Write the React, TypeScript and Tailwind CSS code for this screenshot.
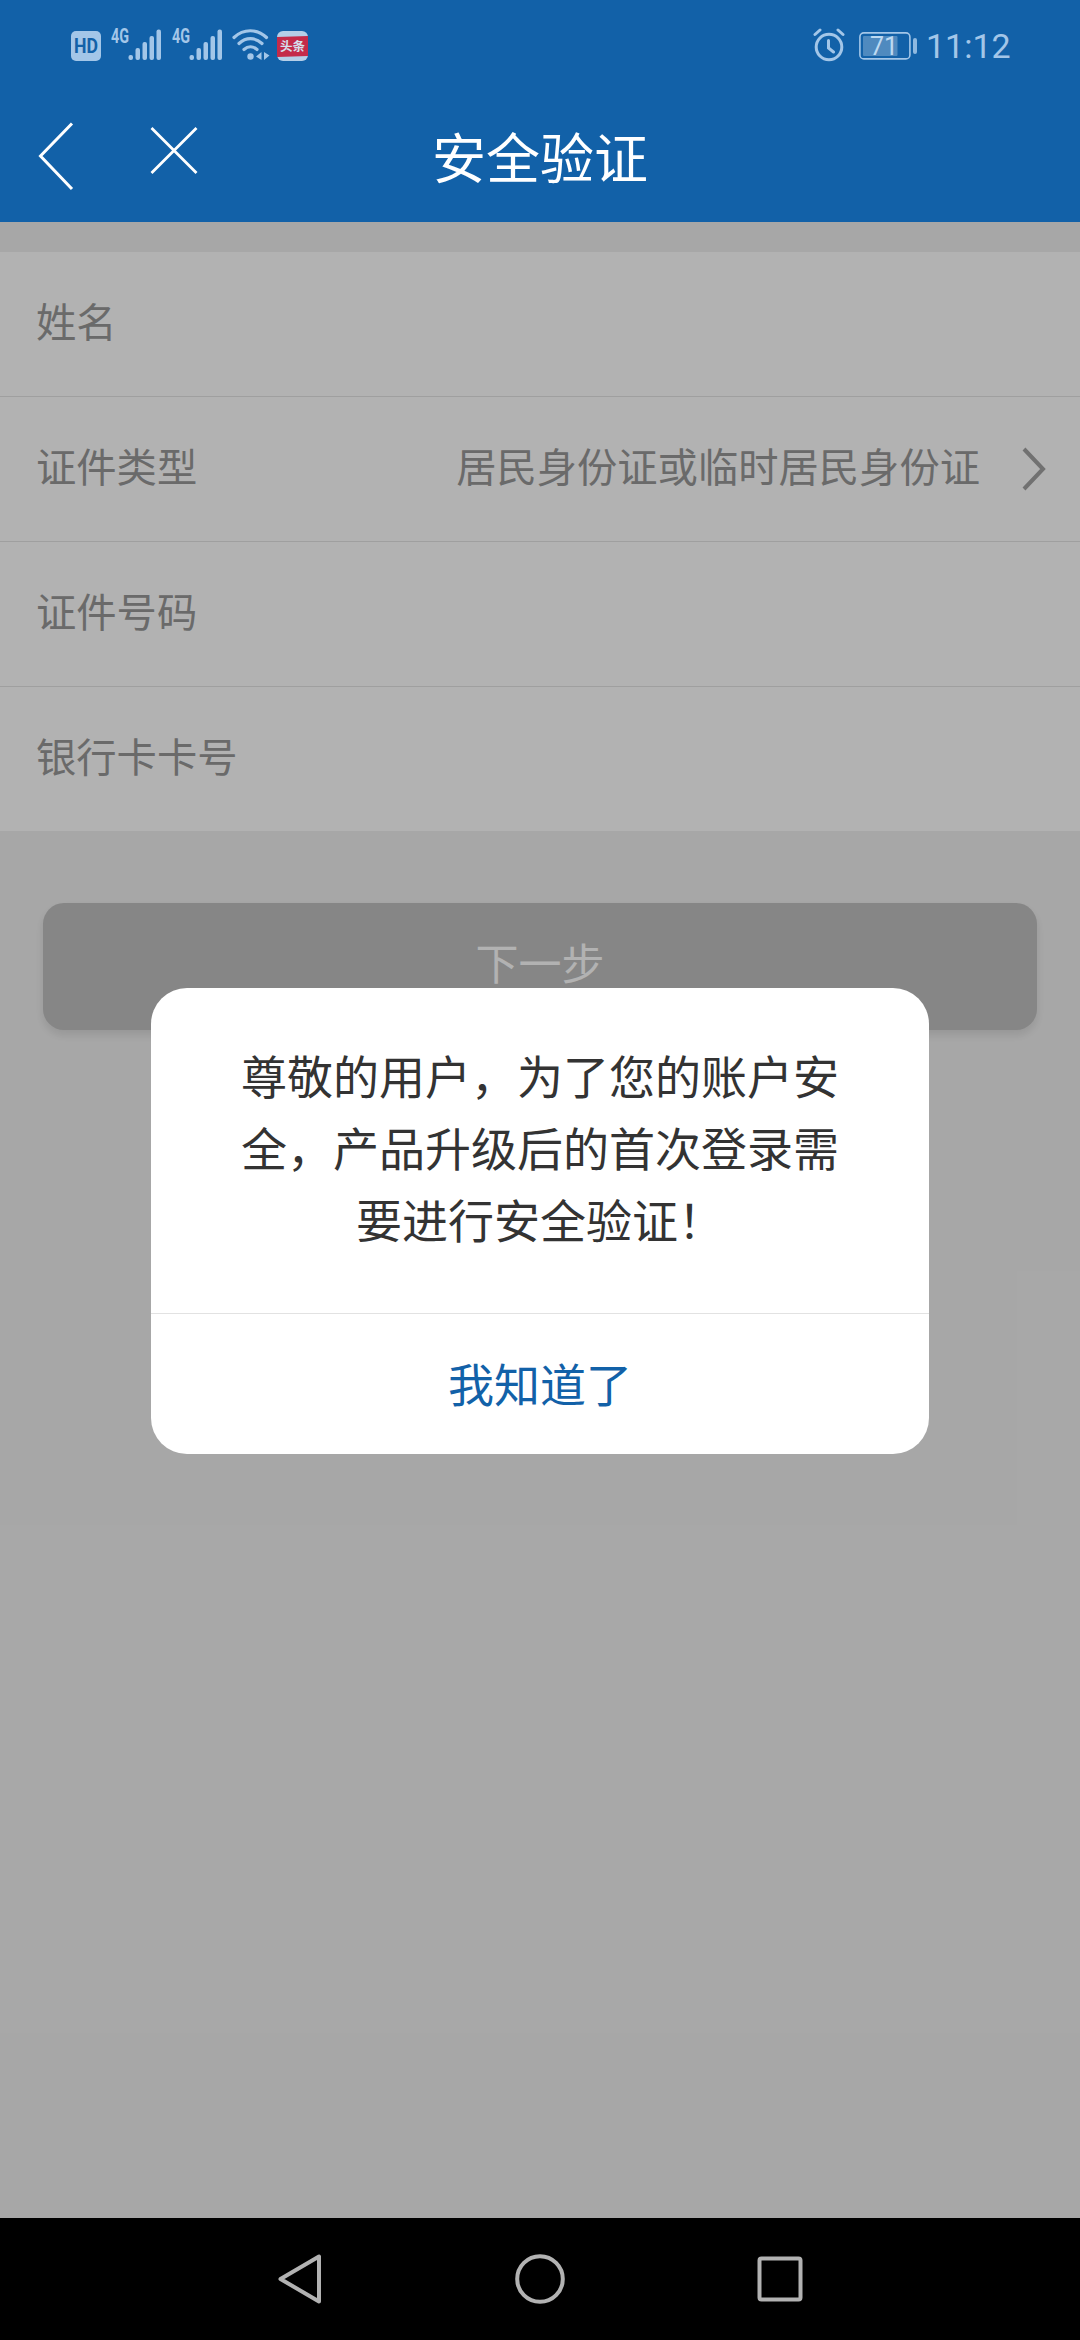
import { ReactNode } from 'react'

interface PropRow {
    label: string,
    last?: boolean,
    children?: ReactNode
}

const SignalIcon = () => (
    <svg width="52" height="44" viewBox="0 -5 52 44" fill="#a3c6e8">
        <text x="0" y="15" fontFamily="Roboto" fontSize="20" fontWeight="700" textLength="18" lengthAdjust="spacingAndGlyphs">4G</text>
        <rect x="17.5" y="27" width="4.5" height="5" rx="2" />
        <rect x="24.5" y="20" width="4.5" height="12" rx="2" />
        <rect x="31.5" y="14" width="4.5" height="18" rx="2" />
        <rect x="38.5" y="8" width="4.5" height="24" rx="2" />
        <rect x="45.5" y="1.5" width="4.5" height="30.5" rx="2" />
    </svg>
)

const WifiIcon = () => (
    <svg width="38" height="34" viewBox="0 0 38 34" fill="none" stroke="#a3c6e8" strokeWidth="3.2" strokeLinecap="round">
        <path d="M2 9.5C11.5 .5 25 .5 34.5 9.5" />
        <path d="M7 15.5C14 9 23 9 30 15.5" />
        <path d="M12 21.5C16 18 21 18 25 21.5" />
        <circle cx="18.5" cy="28.5" r="3.2" fill="#a3c6e8" stroke="none" />
        <path d="M29.5 24v8l-5.5-3.5zM32 24v8l5.5-4.500z" fill="#a3c6e8" stroke="none" />
    </svg>
)

const StatusBar = () => (
    <div className="flex h-[90px] items-center pl-[71px] pr-[70px]">
        <svg className="mt-0.5" width="30" height="30" viewBox="0 0 30 30">
            <rect width="30" height="30" rx="5" fill="#a3c6e8" />
            <text x="3" y="22" fontFamily="Roboto" fontSize="19.5" fontWeight="700" fill="#1261a8" textLength="24" lengthAdjust="spacingAndGlyphs">HD</text>
        </svg>
        <div className="ml-[10px]"><SignalIcon /></div>
        <div className="ml-[9px]"><SignalIcon /></div>
        <div className="ml-[8px]"><WifiIcon /></div>
        <svg className="ml-[7px] mt-0.5" width="31" height="30" viewBox="0 0 31 30">
            <rect width="31" height="30" rx="6" fill="#b5cfe8" />
            <path d="M0 6l31-1v20L0 26z" fill="#c42b4a" />
            <text x="3" y="20" fontFamily="'Noto Sans CJK SC'" fontSize="12.5" fontWeight="700" fill="#d5e0ef">头条</text>
        </svg>
        <svg className="ml-auto" width="32" height="34" viewBox="0 0 32 34" fill="none" stroke="#a3c6e8" strokeWidth="3" strokeLinecap="round">
            <circle cx="16" cy="19" r="12.8" />
            <path d="M2 6.5l5-4.500M30 6.5L25 2M15.5 12.5v7.5l5 4" />
        </svg>
        <svg className="ml-[14px] mt-px" width="58" height="28" viewBox="0 0 58 28">
            <rect x=".9" y=".9" width="50" height="26" rx="4" fill="none" stroke="#a3c6e8" strokeWidth="1.6" />
            <rect x="4" y="4" width="34.5" height="20" rx="1" fill="#4f8abf" />
            <rect x="54" y="6" width="4" height="16" rx="2" fill="#8fb9e0" />
            <text x="11" y="22.5" fontFamily="Roboto" fontSize="25" fill="#bcd9f2">71</text>
        </svg>
        <span className="ml-[9px] mt-0.5 w-[84px] font-[Roboto] text-[34px] leading-10 text-[#a3c6e8]">11:12</span>
    </div>
)

const NavBar = () => (
    <div className="flex h-[132px] items-center">
        <svg className="ml-[36px]" width="40" height="76" viewBox="0 0 40 76" fill="none" stroke="#fff" strokeWidth="3">
            <path d="M36 5.5L4.500 38L36 71" />
        </svg>
        <svg className="-mt-3 ml-[72px]" width="52" height="52" viewBox="0 0 52 52" fill="none" stroke="#fff" strokeWidth="2.8">
            <path d="M3.5 4L48.5 49M48.5 4L3.500 49" />
        </svg>
        <h1 className="-mt-px ml-[232px] text-[54px] leading-[80px] text-white">安全验证</h1>
    </div>
)

const FormRow = (prop: PropRow) => (
    <div className={prop.last ? "bg-white" : "border-b border-[#e4e4e4] bg-white"}>
        <div className="flex h-36 items-center pl-[36px] pr-[34px] text-[40.3px] text-[#999]">
            <span className="-mt-2">{prop.label}</span>
            {prop.children}
        </div>
    </div>
)

const Dialog = () => (
    <div className="absolute inset-0 bg-black/30">
        <div className="mx-auto mt-[766px] h-[466px] w-[778px] overflow-hidden rounded-[36px] bg-white text-center text-[46px]">
            <p className="h-[326px] border-b border-[#e2e2e2] px-[80px] pt-[50px] leading-[72px] text-[#333]">
                尊敬的用户，为了您的账户安<br />全，产品升级后的首次登录需<br />要进行安全验证！
            </p>
            <button className="h-[140px] w-full pb-[3px] text-[#1261a8]">我知道了</button>
        </div>
    </div>
)

const SystemNav = () => (
    <div className="flex h-[122px] items-center bg-black pl-[277px]">
        <svg width="46" height="60" viewBox="0 0 46 60" fill="none" stroke="#b2b2b2" strokeWidth="4" strokeLinejoin="round">
            <path d="M42 7.5V52.5L3.5 30z" />
        </svg>
        <svg className="ml-[190px]" width="54" height="54" viewBox="0 0 54 54" fill="none" stroke="#b2b2b2" strokeWidth="4">
            <circle cx="27" cy="27" r="22.8" />
        </svg>
        <svg className="ml-[188px]" width="50" height="50" viewBox="0 0 50 50" fill="none" stroke="#b2b2b2" strokeWidth="4">
            <rect x="4.5" y="4.5" width="41" height="41" rx="2" />
        </svg>
    </div>
)

const App = () => {
    return (
        <div className="flex h-[2340px] w-[1080px] flex-col overflow-hidden font-['Noto_Sans_CJK_SC',sans-serif]">
            <header className="bg-[#1261a8]">
                <StatusBar />
                <NavBar />
            </header>
            <main className="relative flex-1 bg-[#f0f0f0] pt-[30px]">
                <FormRow label="姓名" />
                <FormRow label="证件类型">
                    <span className="-mt-2 ml-auto">居民身份证或临时居民身份证</span>
                    <svg className="ml-[42px]" width="24" height="46" viewBox="0 0 24 46" fill="none" stroke="#a3a3a3" strokeWidth="4">
                        <path d="M2 3L21 23L2 43" />
                    </svg>
                </FormRow>
                <FormRow label="证件号码" />
                <FormRow label="银行卡卡号" last />
                <button className="mx-[43px] mt-[72px] block h-[127px] w-[994px] rounded-[21px] bg-[#c0c0c0] pb-2.5 text-[43px] text-white shadow-[0_5px_10px_rgba(0,0,0,0.1)]">下一步</button>
                <Dialog />
            </main>
            <SystemNav />
        </div>
    )
}
export default App
